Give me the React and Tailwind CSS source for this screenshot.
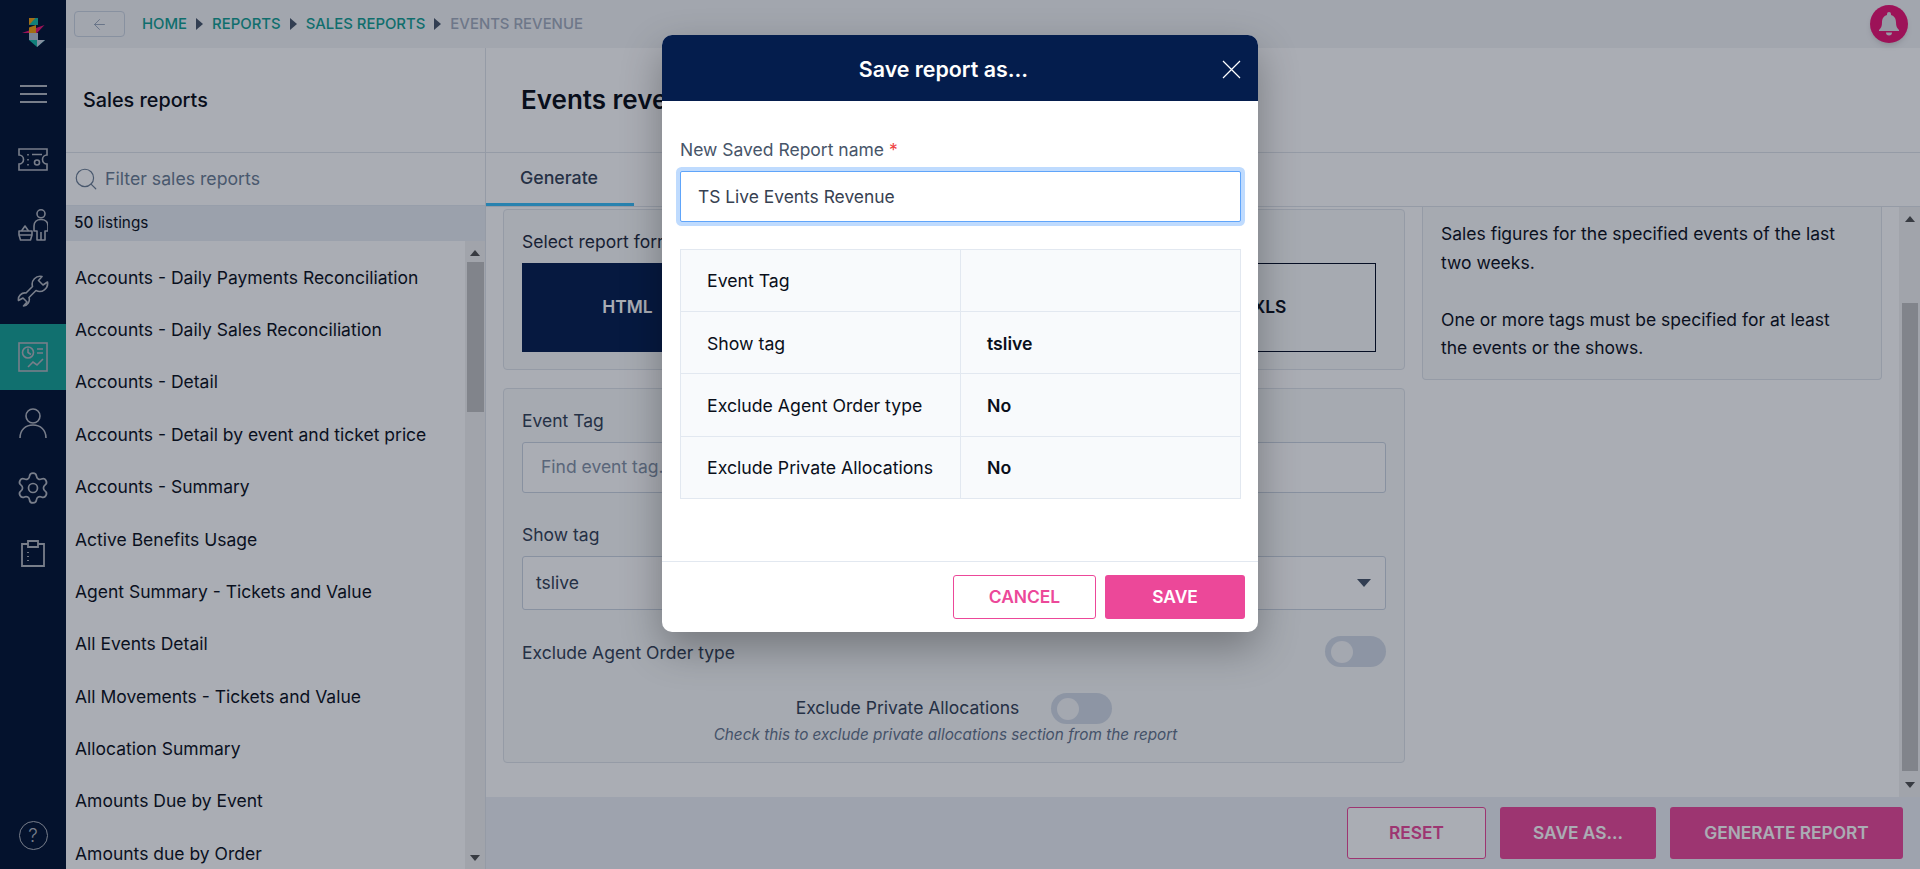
import React from "react";
import { ArrowLeft, Search, Settings } from "lucide-react";

const reports = [
  "Accounts - Daily Payments Reconciliation",
  "Accounts - Daily Sales Reconciliation",
  "Accounts - Detail",
  "Accounts - Detail by event and ticket price",
  "Accounts - Summary",
  "Active Benefits Usage",
  "Agent Summary - Tickets and Value",
  "All Events Detail",
  "All Movements - Tickets and Value",
  "Allocation Summary",
  "Amounts Due by Event",
  "Amounts due by Order",
];

const Tri = ({ up }) => (
  <svg width="10" height="6" viewBox="0 0 10 6" fill="#505050">
    <path d={up ? "M5 0l5 6H0z" : "M0 0h10L5 6z"} />
  </svg>
);

const Logo = () => (
  <svg width="30" height="30" viewBox="0 0 30 30">
    <path d="M11 0h9v7h-9z" fill="#14b8a6" />
    <path d="M11 0h6.500L11 7z" fill="#f59e0b" />
    <path d="M4 15L26.500 7 19 15z" fill="#ec1272" />
    <path d="M11 9.500l7-2.500v8h-7z" fill="#f59e0b" />
    <path d="M11 15h9v7h-9z" fill="#b7c4d4" />
    <path d="M11 22h16l-8 7z" fill="#14b8a6" />
    <path d="M19 22h8l-8 7z" fill="#c6d2df" />
  </svg>
);

const Ticket = () => (
  <svg width="30" height="23" viewBox="0 0 30 23" fill="none" stroke="currentColor" strokeWidth="1.6">
    <path d="M1 1h28v6a4.500 4.500 0 0 0 0 9v6H1v-6a4.500 4.500 0 0 0 0-9z" />
    <path d="M10 6v1.500M10 11v1.500M10 16v1.500M14 6.500h10" />
    <circle cx="19" cy="14.500" r="2.500" />
  </svg>
);

const Shopper = () => (
  <svg width="30" height="32" viewBox="0 0 30 32" fill="none" stroke="currentColor" strokeWidth="1.6" strokeLinejoin="round">
    <circle cx="23" cy="4.800" r="4" />
    <path d="M23 10.500c-4.500 0-7 3-7 6.500v5h3v9h8v-9h3v-5c0-3.500-2.500-6.500-7-6.500z" />
    <path d="M23 23v8" />
    <path d="M1 22h13v4l-1.500 5h-10L1 26z" />
    <path d="M1 26h13M3.500 22l3.500-5 3.500 5" />
  </svg>
);

const WrenchIcon = () => (
  <svg width="32" height="32" viewBox="0 0 32 32" fill="none" stroke="currentColor" strokeWidth="1.6" strokeLinejoin="round">
    <path d="M15.500 11.500A8 8 0 0 1 25 1.500L21.500 5.500 26 10 30.500 7A8 8 0 0 1 19 15.500L12 22.500A6.500 6.500 0 0 1 6.500 31L10 27 6 23 1.500 25.500A6.500 6.500 0 0 1 9 18z" />
  </svg>
);

const Report = () => (
  <svg width="30" height="30" viewBox="0 0 30 30" fill="none" stroke="currentColor" strokeWidth="1.6">
    <rect x="1" y="1" width="28" height="28" />
    <circle cx="10" cy="10.500" r="5.500" />
    <path d="M10 6.500v4l3 2M19 7h6M19 11h6M10 25l5-5 4 3 6-6" />
  </svg>
);

const UserIcon = () => (
  <svg width="28" height="30" viewBox="0 0 28 30" fill="none" stroke="currentColor" strokeWidth="1.6">
    <circle cx="14" cy="8" r="7" />
    <path d="M1 30c0-8 5.500-13 13-13s13 5 13 13" />
  </svg>
);

const Clipboard = () => (
  <svg width="24" height="27" viewBox="0 0 24 27" fill="none" stroke="currentColor" strokeWidth="1.8">
    <path d="M7 4H1v22h22V4h-6" />
    <path d="M7 1h10v6H7z" />
    <path d="M7 12v1M7 16v1M7 20v1" />
  </svg>
);

const Toggle = () => (
  <span className="flex h-[31px] w-[61px] shrink-0 items-center rounded-full bg-[#d3dbe6] pl-[6px]">
    <span className="h-[22px] w-[22px] rounded-full bg-[#f6f7f9]" />
  </span>
);

const Sidebar = () => (
  <aside className="flex h-full w-[66px] shrink-0 flex-col items-center bg-[#001131] pt-[18px] text-[#b3b7bf]">
    <div className="h-[30px]"><Logo /></div>
    <div className="mt-[13px] flex h-[66px] w-full flex-col items-center justify-center gap-[6.500px]">
      <span className="h-[1.500px] w-[27px] bg-current" />
      <span className="h-[1.500px] w-[27px] bg-current" />
      <span className="h-[1.500px] w-[27px] bg-current" />
    </div>
    <div className="flex h-[65.500px] items-center"><Ticket /></div>
    <div className="flex h-[65.500px] items-center"><Shopper /></div>
    <div className="flex h-[65.500px] items-center"><WrenchIcon /></div>
    <div className="flex h-[66px] w-full items-center justify-center bg-[#14a295]"><Report /></div>
    <div className="flex h-[66px] items-center"><UserIcon /></div>
    <div className="flex h-[65.500px] items-center"><Settings size={36} strokeWidth={1.15} /></div>
    <div className="flex h-[65.500px] items-center"><Clipboard /></div>
    <div className="mt-auto mb-[19px] flex h-[29px] w-[29px] items-center justify-center rounded-full border border-current text-[19px] font-light leading-none">?</div>
  </aside>
);

const Crumb = ({ children, last }) => (
  <>
    <span className={last ? "text-[#a3adbd]" : "text-[#129f92]"}>{children}</span>
    {!last && (
      <svg width="7" height="12" viewBox="0 0 7 12" className="mx-[9px]" fill="#475569"><path d="M0 0l7 6-7 6z" /></svg>
    )}
  </>
);

const TopBar = () => (
  <header className="flex h-[48px] shrink-0 items-center bg-[#f3f4f6] pl-[8px] pr-[12px]">
    <button className="flex h-[26px] w-[51px] items-center justify-center rounded-[4px] border border-[#cbd5e1] text-[#94a3b8]">
      <ArrowLeft size={17} strokeWidth={1.300} />
    </button>
    <nav className="ml-[17px] flex items-center text-[14.900px] font-medium">
      <Crumb>HOME</Crumb>
      <Crumb>REPORTS</Crumb>
      <Crumb>SALES REPORTS</Crumb>
      <Crumb last>EVENTS REVENUE</Crumb>
    </nav>
    <button className="ml-auto flex h-[38px] w-[38px] items-center justify-center rounded-full bg-[#ec1272] text-[#dfe2e7] shadow-md">
      <svg width="20" height="24" viewBox="0 0 20 24" fill="currentColor">
        <path d="M10 0a2 2 0 0 1 2 2v1c3.500 1 5 4 5 7.500 0 4 1 5.500 3 7.500v1H0v-1c2-2 3-3.500 3-7.500C3 7 4.500 4 8 3V2a2 2 0 0 1 2-2z" />
        <path d="M7 20.500h6a3 3 0 0 1-6 0z" />
      </svg>
    </button>
  </header>
);

const ListPanel = () => (
  <section className="flex h-full w-[420px] shrink-0 flex-col border-r border-[#dfe4ea] bg-white">
    <div className="flex h-[105px] shrink-0 items-center border-b border-[#dfe4ea] pl-[17px] pt-[1px] text-[19.800px] font-medium text-[#070b14]">
      Sales reports
    </div>
    <div className="flex h-[52px] shrink-0 items-center pl-[7px] text-[#6b7d93]">
      <Search size={26} strokeWidth={1.100} />
      <span className="ml-[6px] pt-[1px] text-[17.700px]">Filter sales reports</span>
    </div>
    <div className="flex h-[36px] shrink-0 items-center border-t border-[#e2e8f0] bg-[#e8edf3] pl-[8px] text-[15.300px] text-[#0a0f1a]">
      <span className="font-medium">50</span>&nbsp;listings
    </div>
    <div className="flex min-h-0 flex-1">
      <ul className="min-w-0 flex-1 overflow-hidden pt-[10.500px]">
        {reports.map((r) => (
          <li key={r} className="flex h-[52.400px] items-center pl-[9px] text-[17.500px] text-[#0a0f1a]">{r}</li>
        ))}
      </ul>
      <div className="flex w-[20px] shrink-0 flex-col items-center bg-[#f1f1f1] pt-[9px] pb-[8px]">
        <Tri up />
        <div className="mt-[6px] h-[150px] w-[17px] bg-[#c1c1c1]" />
        <div className="mt-auto"><Tri /></div>
      </div>
    </div>
  </section>
);

const FormatButton = ({ label, dark }) => (
  <div className={`flex h-[89px] flex-1 items-center justify-center text-[17.400px] font-semibold ${dark ? "bg-[#041d4d] pr-[4px] text-[#fff]" : "border border-[#020b22] text-[#0a0f1a]"}`}>
    {label}
  </div>
);

const Main = () => (
  <section className="flex h-full min-w-0 flex-1 flex-col">
    <div className="flex h-[105px] shrink-0 items-center border-b border-[#dfe4ea] pl-[35px] pb-[2px] text-[26px] font-semibold text-[#070b14]">
      Events revenue
    </div>
    <div className="flex h-[54px] shrink-0 border-b border-[#dfe4ea]">
      <div className="flex h-full w-[148px] items-center justify-center border-b-[3px] border-[#38bdf8] pr-[2px] pt-[1px] text-[17.800px] font-medium text-[#334155]">
        Generate
      </div>
    </div>
    <div className="flex min-h-0 flex-1">
      <div className="flex min-w-0 flex-1 items-start overflow-hidden pl-[17px]">
        <div className="flex w-[902px] shrink-0 flex-col gap-[18px] pt-[2px]">
          <div className="h-[161px] rounded-[4px] border border-[#dfe4ea] bg-[#f9fafb] pl-[18px] pr-[28px] pt-[19px]">
            <p className="text-[17.500px] leading-[26px] text-[#1e293b]">Select report format</p>
            <div className="mt-[8px] flex">
              <FormatButton label="HTML" dark />
              <FormatButton label="PDF" />
              <FormatButton label="CSV" />
              <FormatButton label="XLS" />
            </div>
          </div>
          <div className="h-[375px] rounded-[4px] border border-[#dfe4ea] bg-[#f9fafb] px-[18px] pt-[19px]">
            <p className="text-[17.500px] leading-[26px] text-[#334155]">Event Tag</p>
            <div className="mt-[8px] flex h-[51px] items-center rounded-[3px] border border-[#cbd5e1] bg-white pl-[18px] text-[17.500px] text-[#8492a6]">
              Find event tag...
            </div>
            <p className="mt-[29px] text-[17.500px] leading-[26px] text-[#334155]">Show tag</p>
            <div className="mt-[8px] flex h-[54px] items-center justify-between rounded-[3px] border border-[#cbd5e1] bg-white pl-[13px] pr-[14px] text-[17.500px] text-[#334155]">
              tslive
              <svg width="14" height="8" viewBox="0 0 14 8" fill="#475569"><path d="M0 0h14L7 8z" /></svg>
            </div>
            <div className="mt-[26px] flex h-[31px] items-center justify-between text-[17.500px] text-[#334155]">
              <span className="pt-[3px]">Exclude Agent Order type</span>
              <Toggle />
            </div>
            <div className="mt-[26px] flex h-[31px] items-center justify-center gap-[32px] text-[17.500px] text-[#334155]">
              Exclude Private Allocations
              <Toggle />
            </div>
            <p className="pr-[17px] text-center text-[15.300px] italic text-[#64748b]">Check this to exclude private allocations section from the report</p>
          </div>
        </div>
        <div className="ml-[17px] h-[173px] w-[460px] shrink-0 rounded-b-[4px] border border-t-0 border-[#dfe4ea] bg-[#f9fafb] pl-[18px] pr-[40px] pt-[13px] text-[17.500px] leading-[28.500px] text-[#0a0f1a]">
          Sales figures for the specified events of the last two weeks.
          <br /><br />
          One or more tags must be specified for at least the events or the shows.
        </div>
      </div>
      <div className="flex w-[21px] shrink-0 flex-col items-center bg-[#f1f1f1] pt-[9px] pb-[9px]">
        <Tri up />
        <div className="mt-[81px] h-[468px] w-[16px] bg-[#c1c1c1]" />
        <div className="mt-auto"><Tri /></div>
      </div>
    </div>
    <div className="flex h-[72px] shrink-0 items-center justify-end gap-[14px] bg-[#edf0f6] pr-[17px] text-[17.300px] font-semibold">
      <button className="h-[52px] w-[139px] rounded-[3px] border border-[#ec4899] bg-white text-[#ec4899]">RESET</button>
      <button className="h-[52px] w-[156px] rounded-[3px] bg-[#ec4899] text-white">SAVE AS...</button>
      <button className="h-[52px] w-[233px] rounded-[3px] bg-[#ec4899] text-white">GENERATE REPORT</button>
    </div>
  </section>
);

const rows = [
  ["Event Tag", ""],
  ["Show tag", "tslive"],
  ["Exclude Agent Order type", "No"],
  ["Exclude Private Allocations", "No"],
];

const Modal = () => (
  <div className="absolute inset-0 flex items-start justify-center bg-[#0c1528]/35 pt-[35px]">
    <div className="flex h-[597px] w-[596px] flex-col overflow-hidden rounded-[10px] bg-white shadow-[0_16px_40px_rgba(0,0,0,0.3)]">
      <div className="flex h-[66px] shrink-0 items-center bg-[#041d4d] pr-[17px] pt-[2px] text-white">
        <h2 className="flex-1 pl-[3px] text-center text-[21.400px] font-semibold">Save report as...</h2>
        <svg width="19" height="19" viewBox="0 0 19 19" stroke="currentColor" strokeWidth="1.200"><path d="M1 1l17 17M18 1L1 18" /></svg>
      </div>
      <div className="flex-1 px-[18px] pt-[36px]">
        <label className="block text-[17.500px] leading-[26px] text-[#475569]">
          New Saved Report name <span className="text-[#ef4444]">*</span>
        </label>
        <div className="mt-[8px] flex h-[51px] w-[561px] items-center rounded-[2px] border border-[#60a5fa] bg-white pl-[17px] pt-[2px] text-[17.400px] text-[#374151] ring-4 ring-[#bfdbfe]">
          TS Live Events Revenue
        </div>
        <table className="mt-[27px] w-[561px] table-fixed border-collapse text-[17.700px] text-[#0a0f1a]">
          <tbody>
            {rows.map(([k, v]) => (
              <tr key={k} className="h-[62.200px] bg-[#f8fafc]">
                <td className="border border-[#e2e8f0] pl-[26px] pt-[2px]">{k}</td>
                <td className="border border-[#e2e8f0] pl-[26px] pt-[2px] font-semibold">{v}</td>
              </tr>
            ))}
          </tbody>
        </table>
      </div>
      <div className="flex h-[71px] shrink-0 items-start justify-end gap-[9px] border-t border-[#e2e8f0] pt-[13px] pr-[13px] text-[17.400px] font-semibold">
        <button className="h-[44px] w-[143px] rounded-[3px] border border-[#ec4899] bg-white text-[#ec4899]">CANCEL</button>
        <button className="h-[44px] w-[140px] rounded-[3px] bg-[#ec4899] text-white">SAVE</button>
      </div>
    </div>
  </div>
);

export default function App() {
  return (
    <div className="relative flex h-[869px] w-full overflow-hidden bg-white font-['Inter',sans-serif]">
      <Sidebar />
      <div className="flex min-w-0 flex-1 flex-col">
        <TopBar />
        <div className="flex min-h-0 flex-1">
          <ListPanel />
          <Main />
        </div>
      </div>
      <Modal />
    </div>
  );
}
